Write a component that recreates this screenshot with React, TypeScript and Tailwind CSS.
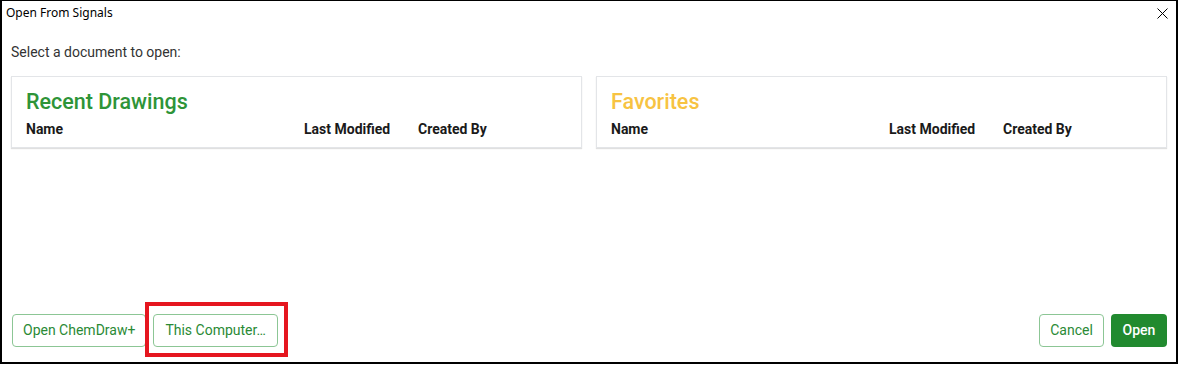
export default function App() {
  const cols = ["Name", "Last Modified", "Created By"];

  const Panel = ({ title, color }: { title: string; color: string }) => (
    <div className="flex-1 h-[72px] border border-[#e3e5e8] shadow-[0_1px_1px_rgba(0,0,0,0.12)] pt-[11px] pl-[14px]">
      <div className={`text-[21.5px] leading-[28px] font-medium ${color}`}>{title}</div>
      <div className="flex mt-[3px] text-[14px] leading-[20px] font-bold text-[#1a1a1a]">
        <div className="w-[278px]">{cols[0]}</div>
        <div className="w-[114px]">{cols[1]}</div>
        <div>{cols[2]}</div>
      </div>
    </div>
  );

  return (
    <div className="relative w-[1183px] h-[369px] bg-white" style={{ fontFamily: "Roboto, 'Noto Sans', sans-serif" }}>
      <div className="w-[1178px] h-[364px] border-t border-l-2 border-r-2 border-b-2 border-black flex flex-col">
        <div className="h-[23px] flex items-center justify-between pl-[4px] pr-[8px]">
          <span className="text-[12px] text-black" style={{ fontFamily: "'Noto Sans', 'Liberation Sans', sans-serif" }}>
            Open From Signals
          </span>
          <svg width="11" height="11" viewBox="0 0 11 11" className="mt-[1px]">
            <path d="M0.5 0.5 L10.5 10.5 M10.5 0.5 L0.5 10.5" stroke="#000" strokeWidth="1" />
          </svg>
        </div>
        <div className="flex-1 flex flex-col pl-[9px] pr-[9px] pb-[15px]">
          <div className="mt-[18px] text-[14px] leading-[20px] text-[#333]">Select a document to open:</div>
          <div className="flex gap-[14px] mt-[14px]">
            <Panel title="Recent Drawings" color="text-[#2e9438]" />
            <Panel title="Favorites" color="text-[#f7c342]" />
          </div>
          <div className="mt-auto flex items-center">
            <button className="h-[33px] px-[10px] ml-[1px] rounded-[4px] border border-[#8cc695] text-[14px] text-[#2a8a35] bg-white">
              Open ChemDraw+
            </button>
            <button className="h-[33px] px-[11px] ml-[7px] rounded-[4px] border border-[#8cc695] text-[14px] text-[#2a8a35] bg-white">
              This Computer…
            </button>
            <div className="flex-1" />
            <button className="h-[33px] w-[65px] rounded-[4px] border border-[#8cc695] text-[14px] text-[#2a8a35] bg-white">
              Cancel
            </button>
            <button className="h-[33px] w-[56px] ml-[7px] rounded-[4px] bg-[#218a2f] text-[14px] font-medium text-white">
              Open
            </button>
          </div>
        </div>
      </div>
      <div className="absolute left-[145px] top-[302px] w-[143px] h-[55px] border-[4px] border-[#e5161f]" />
    </div>
  );
}
